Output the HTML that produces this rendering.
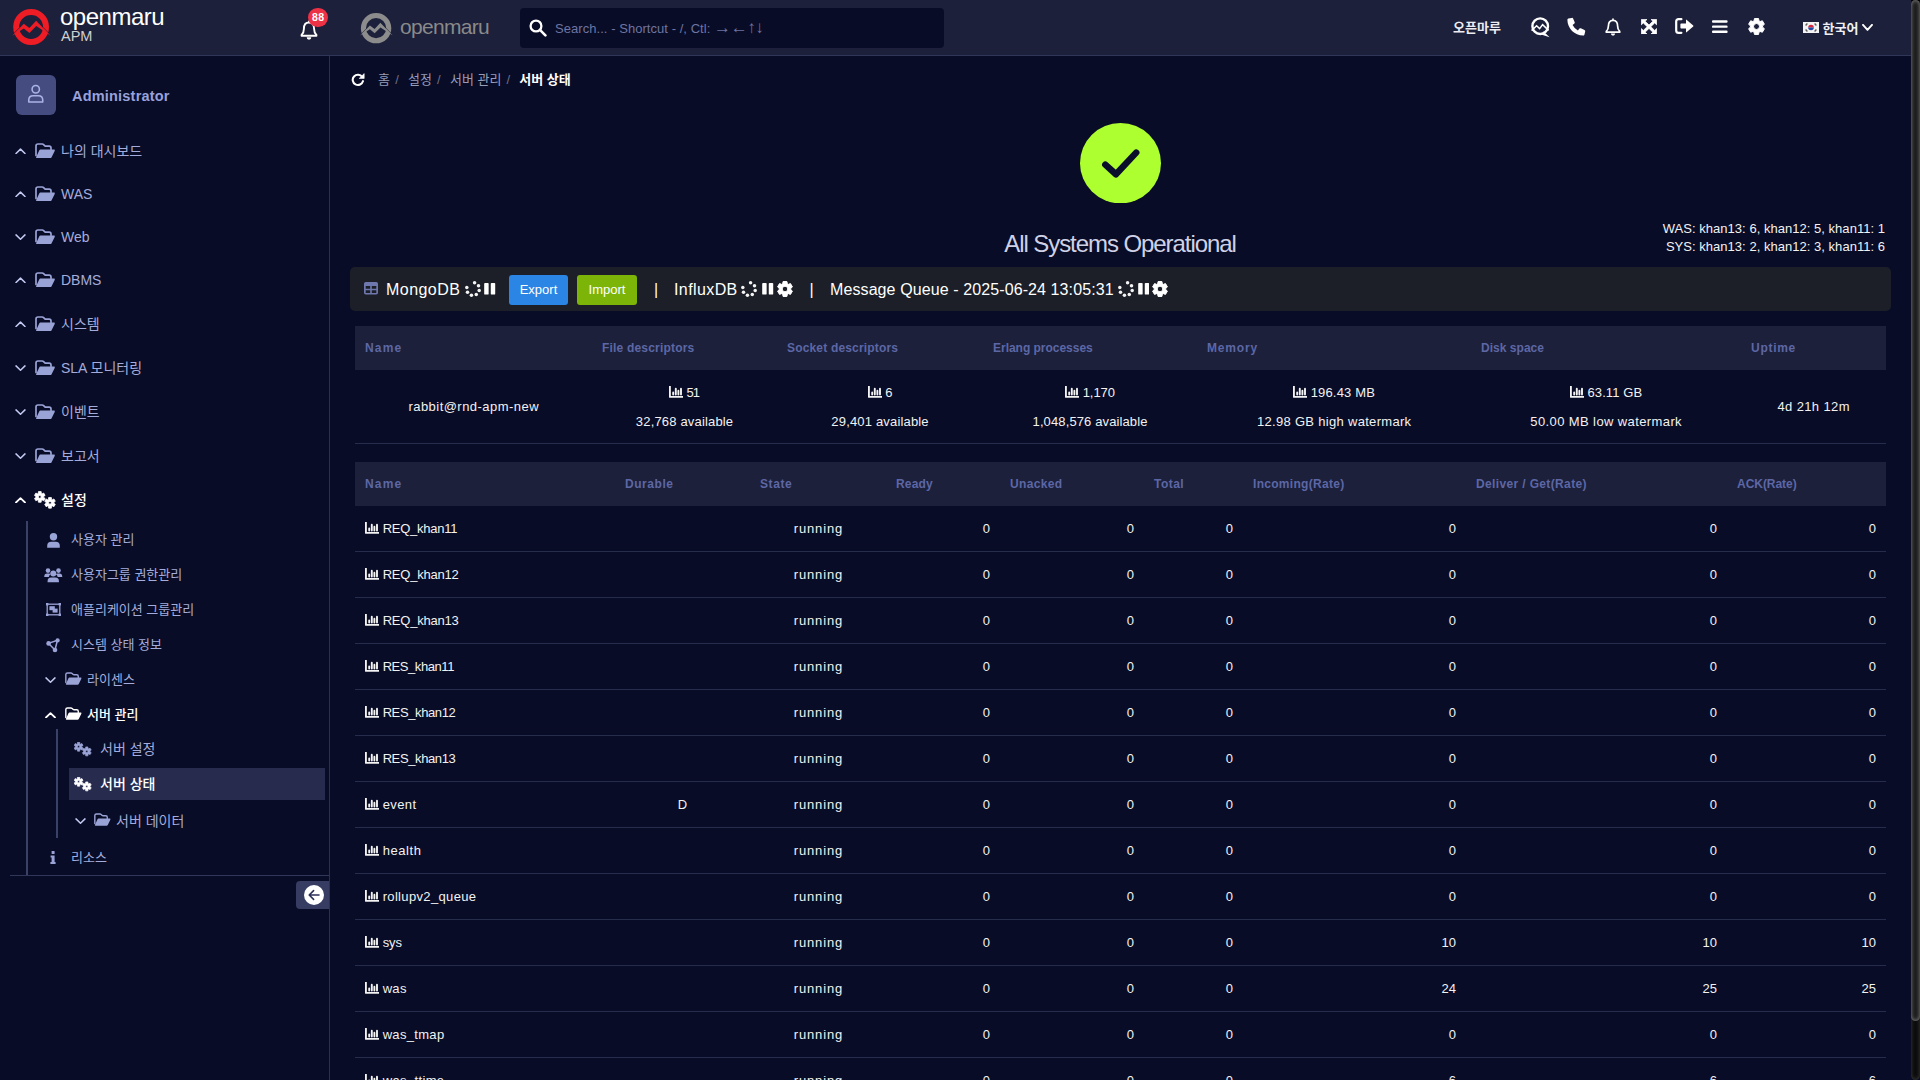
<!DOCTYPE html><html lang="ko"><head><meta charset="utf-8"><title>OPENMARU APM - 서버 상태</title><style>*{box-sizing:border-box;margin:0;padding:0}
html,body{width:1920px;height:1080px;overflow:hidden;background:#090c26;font-family:"Liberation Sans","Noto Sans CJK KR",sans-serif;color:#f2f2f2;font-size:13.5px}
svg{display:block}
#hdr{position:absolute;left:0;top:0;width:1920px;height:56px;background:#1c203a;border-bottom:1px solid #2f3657}
#hdr>div{position:absolute}
.logo1{left:11px;top:8px}
.brand1{left:60px;top:3px;font-size:24px;line-height:28px;color:#fff;letter-spacing:-0.5px;font-weight:400}
.brand2{left:61px;top:28px;font-size:14.5px;line-height:17px;color:#d0d0d0}
.bell1{left:300px;top:20px}
.badge{left:308px;top:8px;width:20px;height:19px;border-radius:10px;background:#ee3246;color:#fff;font-size:10.5px;font-weight:700;line-height:19px;text-align:center;letter-spacing:0.3px;text-indent:0.3px}
.logo2{left:359px;top:12px}
.brand3{left:400px;top:13px;font-size:21px;line-height:28px;color:#8a8a8a;letter-spacing:-0.7px;font-weight:400}
.search{left:520px;top:8px;width:424px;height:40px;background:#090c26;border-radius:4px}
.search .sicon{position:absolute;left:9px;top:11px}
.search .ph{position:absolute;left:35px;top:1px;line-height:40px;font-size:13px;color:#6d75a2;white-space:nowrap;letter-spacing:0.05px}
.search .ph .ar{position:static;font-size:17px;letter-spacing:-0.4px;line-height:20px}
.org{left:1453px;top:18.4px;font-size:13px;line-height:20px;color:#ececf2;font-weight:700;white-space:nowrap}
.hi{top:17px;width:20px;height:20px}
.flag{left:1803px;top:22px}
.lang{left:1822.5px;top:18.5px;font-size:13px;line-height:20px;color:#f0f0f4;font-weight:700;white-space:nowrap}
.langchev{left:1862px;top:24px}

#side{position:absolute;left:0;top:56px;width:330px;height:1024px;border-right:1px solid #2a3050;background:#090c26}
#side>div{position:absolute}
.avatar{left:16px;top:19px;width:40px;height:40px;border-radius:6px;background:#454d80}
.avatar svg{margin:9.2px 0 0 11.2px}
.admin{left:72px;top:30px;font-size:14.5px;font-weight:700;line-height:20px;color:#98a2dc;white-space:nowrap;letter-spacing:0.2px}
.mi,.si{left:0;width:329px;height:0}
.mi span,.si span{position:absolute;white-space:nowrap}
.mi .chev{left:15px;top:-3.4px}
.mi .fold{left:35px;top:-8px}
.mi .lbl{left:61px;top:-10px;line-height:20px;font-size:14px;color:#a4acdc}
.mi.act .lbl,.si.act .lbl{color:#fff;font-weight:500}
.mi.act .fold{left:34px;top:-9px}
.si .lbl{left:71px;top:-10px;line-height:20px;font-size:13px;color:#a4acdc}
.si .ic{left:44.2px;top:-7px;width:18px}
.si .ic svg{margin:0 auto}
.si .chev2{left:45px;top:-3px}
.si .fold2{left:65px;top:-8px}
.si .ic3{left:74px;top:-7px}
.si .chev3{left:75px;top:-3px}
.si .fold3{left:94px;top:-8px}
.si svg{transform-origin:0 0}
.fold2 svg,.fold3 svg{width:17px;height:13.5px}
.vline{width:2px;background:#3a4166}
.sel{left:69px;top:712px;width:256px;height:32px;background:#272c4f}
.hline{left:10px;top:819px;width:319px;height:1px;background:#2f3657}
.collapse{left:296px;top:825px;width:33px;height:28px;background:#373d62;border-radius:4px 0 0 4px}
.collapse svg{margin:4px 0 0 8px}

#main{position:absolute;left:330px;top:56px;width:1590px;height:1024px}
#main>div,#main>table{position:absolute}
.bc{left:0;top:0;height:48px;width:600px}
.bc span{position:absolute;top:14px;line-height:20px;font-size:13px;white-space:nowrap;margin-left:-330px}
.bc .rf{left:351.3px;top:17px}
.bc .b1{color:#979cb9}
.bc .sl{color:#6b708d}
.bc .b2{color:#fff;font-weight:700}
.okc{left:750px;top:67px}
.okt{left:490px;width:600px;top:171px;text-align:center;font-size:24px;line-height:34px;color:#cfd2e6;letter-spacing:-1.07px;font-weight:400;white-space:nowrap}
.rt{left:1000px;width:555px;text-align:right;font-size:13px;line-height:18px;color:#f2f2f2;white-space:nowrap;letter-spacing:0.03px}
.tb{left:20px;top:211px;width:1541px;height:44px;background:#1c1f28;border-radius:5px}
.tb span{position:absolute;white-space:nowrap}
.tb .tt{top:12px;line-height:22px;font-size:16px;color:#fff;letter-spacing:0.1px}
.btn{top:8px;height:30px;border-radius:3px;color:#fff;font-size:13px;line-height:30px;text-align:center}
.b-blue{background:#2b85e4}
.b-green{background:#7db408}
table{border-collapse:separate;border-spacing:0;table-layout:fixed}
.t1{left:25px;top:270px;width:1531px}
.t2{left:25px;top:406px;width:1531px}
th{height:44px;background:#1c203a;color:#5d67a6;font-size:12px;font-weight:700;text-align:left;padding:0 10px;white-space:nowrap}
td{font-size:13px;color:#f2f2f2;white-space:nowrap}
.t1 td{height:74px;text-align:center;border-bottom:1px solid #262c4c;vertical-align:middle}
.t1 .l1{line-height:20px;margin-top:1px}
.t1 .l2{line-height:20px;margin-top:9px}
.ch{display:inline-block;vertical-align:-1px;margin-right:0}
.t2 td{height:46px;border-bottom:1px solid #262c4c;padding:0 10px;vertical-align:middle}
.t2 td.c{text-align:center}
.t2 td.r{text-align:right}
#sbtrack{position:absolute;left:1911px;top:0;width:9px;height:1080px;background:#0b0b0b;border-radius:5px;box-shadow:inset 0 0 4px 0 rgba(120,120,120,.5)}
#sbtrack::before{content:"";position:absolute;left:0;top:0;width:9px;height:6px;background:#000}
#sbthumb{position:absolute;left:1911px;top:0;width:9px;height:1021px;border-radius:4.5px;background:#1b1b1b;box-shadow:inset 0 0 4px 0px rgba(220,220,220,.6)}
</style></head><body>

<div id="hdr">
  <div class="logo1"><svg width="40" height="38" viewBox="0 0 40 38" ><circle cx="20.1" cy="19" r="14.9" fill="none" stroke="#ee1c25" stroke-width="6"/><path d="M1.25 27.3 L12.8 15.5 L18.4 19.6 L25.1 12.45 L39.7 27.3" fill="none" stroke="#1c203a" stroke-width="0.9"/><path d="M1.25 27.7 L12.8 15.8 L18.4 19.9 L25.1 12.75 L39.7 27.7 L25.3 18.1 L18.4 25 L12.8 20.4 Z" fill="#ee1c25"/></svg></div>
  <div class="brand1">openmaru</div>
  <div class="brand2">APM</div>
  <div class="bell1"><svg width="18" height="20" viewBox="0 0 16 18" ><path d="M8 1.2 V2.4 M8 2.3 C4.6 2.3 3.4 5 3.4 8 C3.4 11 2.6 12.2 1.3 13.4 V14.2 H14.7 V13.4 C13.4 12.2 12.6 11 12.6 8 C12.6 5 11.4 2.3 8 2.3Z" fill="none" stroke="#ffffff" stroke-width="1.7" stroke-linejoin="round" stroke-linecap="round"/><path d="M5.9 15.6 A2.1 2.1 0 0 0 10.1 15.6Z" fill="#ffffff"/></svg></div>
  <div class="badge">88</div>
  <div class="logo2"><svg width="34" height="32.3" viewBox="0 0 40 38" ><circle cx="20.1" cy="19" r="14.9" fill="none" stroke="#8c8c8c" stroke-width="6"/><path d="M1.25 27.3 L12.8 15.5 L18.4 19.6 L25.1 12.45 L39.7 27.3" fill="none" stroke="#1c203a" stroke-width="0.9"/><path d="M1.25 27.7 L12.8 15.8 L18.4 19.9 L25.1 12.75 L39.7 27.7 L25.3 18.1 L18.4 25 L12.8 20.4 Z" fill="#8c8c8c"/></svg></div>
  <div class="brand3">openmaru</div>
  <div class="search"><span class="sicon"><svg width="18" height="18" viewBox="0 0 18 18" ><circle cx="7" cy="7" r="5.4" fill="none" stroke="#fff" stroke-width="2.3"/><path d="M11.2 11.2 L16.4 16.4" stroke="#fff" stroke-width="2.6" stroke-linecap="round"/></svg></span><span class="ph">Search... - Shortcut - /, Ctl: <span class="ar">→←↑↓</span></span></div>
  <div class="org">오픈마루</div>
  <div class="hi" style="left:1531px;top:17px"><svg width="19" height="21" viewBox="0 0 19 21" ><circle cx="9.2" cy="9.2" r="7.8" fill="none" stroke="#fff" stroke-width="2.4"/><path d="M12.6 14.6 L18.6 20.2 L10.2 17.4 Z" fill="#fff"/><path d="M0.6 13.6 L5.6 8.8 L8.6 11.6 L11.6 7.6 L17.6 13.4" fill="none" stroke="#fff" stroke-width="1.5" stroke-linejoin="miter"/></svg></div>
  <div class="hi" style="left:1567px;top:17px"><svg width="19" height="19" viewBox="0 0 19 19" ><path d="M4.6 0.9 Q5.6 0.5 6.1 1.5 L7.7 5.2 Q8 6 7.4 6.6 L5.6 8.1 Q7.4 11.8 10.9 13.4 L12.4 11.6 Q13 11 13.8 11.3 L17.5 12.9 Q18.5 13.4 18.2 14.4 L17.4 17.7 Q17.1 18.6 16.2 18.6 C7.6 18.6 0.4 11.4 0.4 2.8 Q0.4 1.9 1.3 1.6 Z" fill="#fff"/></svg></div>
  <div class="hi" style="left:1604.5px;top:17.5px"><svg width="16" height="18" viewBox="0 0 16 18" ><path d="M8 1.2 V2.4 M8 2.3 C4.6 2.3 3.4 5 3.4 8 C3.4 11 2.6 12.2 1.3 13.4 V14.2 H14.7 V13.4 C13.4 12.2 12.6 11 12.6 8 C12.6 5 11.4 2.3 8 2.3Z" fill="none" stroke="#ffffff" stroke-width="1.7" stroke-linejoin="round" stroke-linecap="round"/><path d="M5.9 15.6 A2.1 2.1 0 0 0 10.1 15.6Z" fill="#ffffff"/></svg></div>
  <div class="hi" style="left:1640.5px;top:18.7px"><svg width="16" height="15.4" viewBox="0 0 16 16" preserveAspectRatio="none"><path d="M0.4 0.4 H6 L4.1 2.3 L8 6.2 L11.9 2.3 L10 0.4 H15.6 V6 L13.7 4.1 L9.8 8 L13.7 11.9 L15.6 10 V15.6 H10 L11.9 13.7 L8 9.8 L4.1 13.7 L6 15.6 H0.4 V10 L2.3 11.9 L6.2 8 L2.3 4.1 L0.4 6 Z" fill="#fff" stroke="#fff" stroke-width="0.8" stroke-linejoin="round"/></svg></div>
  <div class="hi" style="left:1675px;top:18.4px"><svg width="19" height="16" viewBox="0 0 19 16" ><path d="M6.4 1.2 H3.6 Q1.2 1.2 1.2 3.6 V12.4 Q1.2 14.8 3.6 14.8 H6.4" fill="none" stroke="#fff" stroke-width="2.2" stroke-linecap="round"/><path d="M6.2 5.4 H11 V2.2 Q11 1.2 11.8 1.9 L18.2 7.4 Q18.8 8 18.2 8.6 L11.8 14.1 Q11 14.8 11 13.8 V10.6 H6.2 Q5.4 10.6 5.4 9.8 V6.2 Q5.4 5.4 6.2 5.4Z" fill="#fff"/></svg></div>
  <div class="hi" style="left:1712.4px;top:19.5px"><svg width="15.6" height="13.4" viewBox="0 0 16 14" preserveAspectRatio="none"><rect x="0" y="0.3" width="16" height="2.5" rx="1" fill="#fff"/><rect x="0" y="5.7" width="16" height="2.5" rx="1" fill="#fff"/><rect x="0" y="11.1" width="16" height="2.5" rx="1" fill="#fff"/></svg></div>
  <div class="hi" style="left:1748px;top:18px"><svg width="17" height="17" viewBox="0 0 17 17" ><path d="M11.00 14.09 L10.53 16.45 L6.47 16.45 L6.00 14.09 L4.91 13.46 L2.63 14.23 L0.61 10.72 L2.41 9.13 L2.41 7.87 L0.61 6.28 L2.63 2.77 L4.91 3.54 L6.00 2.91 L6.47 0.55 L10.53 0.55 L11.00 2.91 L12.09 3.54 L14.37 2.77 L16.39 6.28 L14.59 7.87 L14.59 9.13 L16.39 10.72 L14.37 14.23 L12.09 13.46Z M5.53 8.50 a2.9749999999999996 2.9749999999999996 0 1 0 5.95 0 a2.9749999999999996 2.9749999999999996 0 1 0 -5.95 0Z" fill="#ffffff" fill-rule="evenodd" stroke="#ffffff" stroke-width="1" stroke-linejoin="round"/></svg></div>
  <div class="flag"><svg width="16" height="11" viewBox="0 0 16 11" ><rect width="16" height="11" fill="#f4f4f4"/><path d="M5.2 5.5 A2.8 2.8 0 0 1 10.8 5.5 Z" fill="#d8283c"/><path d="M5.2 5.5 A2.8 2.8 0 0 0 10.8 5.5 Z" fill="#1f4aa8"/><path d="M2.6 3.4 L4.4 1.6 M2.6 7.6 L4.4 9.4 M13.4 3.4 L11.6 1.6 M13.4 7.6 L11.6 9.4" stroke="#5a5a5a" stroke-width="1.4"/><path d="M6.4 5.5 A1.4 1.4 0 0 1 8 5.5 A1.4 1.4 0 0 0 9.6 5.5" fill="none" stroke="#d8283c" stroke-width="0.1"/></svg></div>
  <div class="lang">한국어</div>
  <div class="langchev"><svg width="11" height="7" viewBox="0 0 11 7" ><path d="M1 0.9 L5.5 5.9 L10 0.9" fill="none" stroke="#ffffff" stroke-width="1.9" stroke-linecap="round" stroke-linejoin="round"/></svg></div>
</div>

<div id="side">
<div class="avatar"><svg width="17.5" height="19.25" viewBox="0 0 20 22" ><circle cx="10" cy="6" r="4.2" fill="none" stroke="#aab3e6" stroke-width="1.8"/><path d="M2 20.6 V18.6 Q2 13.4 7 13.4 H13 Q18 13.4 18 18.6 V20.6 Z" fill="none" stroke="#aab3e6" stroke-width="1.8" stroke-linejoin="round"/></svg></div><div class="admin">Administrator</div>
<div class="mi" style="top:95px"><span class="chev"><svg width="11" height="6.4" viewBox="0 0 11 6.4" ><path d="M1 5.5 L5.5 1.1 L10 5.5" fill="none" stroke="#c3caf2" stroke-width="1.5" stroke-linecap="round" stroke-linejoin="round"/></svg></span><span class="fold"><svg width="20.5" height="16" viewBox="0 0 20.5 16" ><path d="M1 12.5 V3 Q1 1 3 1 H7.2 Q8 1 8.6 1.6 L9.6 2.6 Q10.2 3.2 11 3.2 H14.2 Q16 3.2 16 5 V6.4" fill="none" stroke="#9aa3d6" stroke-width="1.7" stroke-linejoin="round" stroke-linecap="round"/><path d="M5.4 6.6 H19 Q20.3 6.6 19.7 7.9 L16.6 14.2 Q16.2 15.1 15.2 15.1 H2 Q0.6 15.1 1.2 13.9 L4.2 7.5 Q4.6 6.6 5.4 6.6Z" fill="#9aa3d6"/></svg></span><span class="lbl">나의 대시보드</span></div>
<div class="mi" style="top:138px"><span class="chev"><svg width="11" height="6.4" viewBox="0 0 11 6.4" ><path d="M1 5.5 L5.5 1.1 L10 5.5" fill="none" stroke="#c3caf2" stroke-width="1.5" stroke-linecap="round" stroke-linejoin="round"/></svg></span><span class="fold"><svg width="20.5" height="16" viewBox="0 0 20.5 16" ><path d="M1 12.5 V3 Q1 1 3 1 H7.2 Q8 1 8.6 1.6 L9.6 2.6 Q10.2 3.2 11 3.2 H14.2 Q16 3.2 16 5 V6.4" fill="none" stroke="#9aa3d6" stroke-width="1.7" stroke-linejoin="round" stroke-linecap="round"/><path d="M5.4 6.6 H19 Q20.3 6.6 19.7 7.9 L16.6 14.2 Q16.2 15.1 15.2 15.1 H2 Q0.6 15.1 1.2 13.9 L4.2 7.5 Q4.6 6.6 5.4 6.6Z" fill="#9aa3d6"/></svg></span><span class="lbl">WAS</span></div>
<div class="mi" style="top:181px"><span class="chev"><svg width="11" height="6.4" viewBox="0 0 11 6.4" ><path d="M1 0.9 L5.5 5.300000000000001 L10 0.9" fill="none" stroke="#c3caf2" stroke-width="1.5" stroke-linecap="round" stroke-linejoin="round"/></svg></span><span class="fold"><svg width="20.5" height="16" viewBox="0 0 20.5 16" ><path d="M1 12.5 V3 Q1 1 3 1 H7.2 Q8 1 8.6 1.6 L9.6 2.6 Q10.2 3.2 11 3.2 H14.2 Q16 3.2 16 5 V6.4" fill="none" stroke="#9aa3d6" stroke-width="1.7" stroke-linejoin="round" stroke-linecap="round"/><path d="M5.4 6.6 H19 Q20.3 6.6 19.7 7.9 L16.6 14.2 Q16.2 15.1 15.2 15.1 H2 Q0.6 15.1 1.2 13.9 L4.2 7.5 Q4.6 6.6 5.4 6.6Z" fill="#9aa3d6"/></svg></span><span class="lbl">Web</span></div>
<div class="mi" style="top:224px"><span class="chev"><svg width="11" height="6.4" viewBox="0 0 11 6.4" ><path d="M1 5.5 L5.5 1.1 L10 5.5" fill="none" stroke="#c3caf2" stroke-width="1.5" stroke-linecap="round" stroke-linejoin="round"/></svg></span><span class="fold"><svg width="20.5" height="16" viewBox="0 0 20.5 16" ><path d="M1 12.5 V3 Q1 1 3 1 H7.2 Q8 1 8.6 1.6 L9.6 2.6 Q10.2 3.2 11 3.2 H14.2 Q16 3.2 16 5 V6.4" fill="none" stroke="#9aa3d6" stroke-width="1.7" stroke-linejoin="round" stroke-linecap="round"/><path d="M5.4 6.6 H19 Q20.3 6.6 19.7 7.9 L16.6 14.2 Q16.2 15.1 15.2 15.1 H2 Q0.6 15.1 1.2 13.9 L4.2 7.5 Q4.6 6.6 5.4 6.6Z" fill="#9aa3d6"/></svg></span><span class="lbl">DBMS</span></div>
<div class="mi" style="top:268px"><span class="chev"><svg width="11" height="6.4" viewBox="0 0 11 6.4" ><path d="M1 5.5 L5.5 1.1 L10 5.5" fill="none" stroke="#c3caf2" stroke-width="1.5" stroke-linecap="round" stroke-linejoin="round"/></svg></span><span class="fold"><svg width="20.5" height="16" viewBox="0 0 20.5 16" ><path d="M1 12.5 V3 Q1 1 3 1 H7.2 Q8 1 8.6 1.6 L9.6 2.6 Q10.2 3.2 11 3.2 H14.2 Q16 3.2 16 5 V6.4" fill="none" stroke="#9aa3d6" stroke-width="1.7" stroke-linejoin="round" stroke-linecap="round"/><path d="M5.4 6.6 H19 Q20.3 6.6 19.7 7.9 L16.6 14.2 Q16.2 15.1 15.2 15.1 H2 Q0.6 15.1 1.2 13.9 L4.2 7.5 Q4.6 6.6 5.4 6.6Z" fill="#9aa3d6"/></svg></span><span class="lbl">시스템</span></div>
<div class="mi" style="top:312px"><span class="chev"><svg width="11" height="6.4" viewBox="0 0 11 6.4" ><path d="M1 0.9 L5.5 5.300000000000001 L10 0.9" fill="none" stroke="#c3caf2" stroke-width="1.5" stroke-linecap="round" stroke-linejoin="round"/></svg></span><span class="fold"><svg width="20.5" height="16" viewBox="0 0 20.5 16" ><path d="M1 12.5 V3 Q1 1 3 1 H7.2 Q8 1 8.6 1.6 L9.6 2.6 Q10.2 3.2 11 3.2 H14.2 Q16 3.2 16 5 V6.4" fill="none" stroke="#9aa3d6" stroke-width="1.7" stroke-linejoin="round" stroke-linecap="round"/><path d="M5.4 6.6 H19 Q20.3 6.6 19.7 7.9 L16.6 14.2 Q16.2 15.1 15.2 15.1 H2 Q0.6 15.1 1.2 13.9 L4.2 7.5 Q4.6 6.6 5.4 6.6Z" fill="#9aa3d6"/></svg></span><span class="lbl">SLA 모니터링</span></div>
<div class="mi" style="top:356px"><span class="chev"><svg width="11" height="6.4" viewBox="0 0 11 6.4" ><path d="M1 0.9 L5.5 5.300000000000001 L10 0.9" fill="none" stroke="#c3caf2" stroke-width="1.5" stroke-linecap="round" stroke-linejoin="round"/></svg></span><span class="fold"><svg width="20.5" height="16" viewBox="0 0 20.5 16" ><path d="M1 12.5 V3 Q1 1 3 1 H7.2 Q8 1 8.6 1.6 L9.6 2.6 Q10.2 3.2 11 3.2 H14.2 Q16 3.2 16 5 V6.4" fill="none" stroke="#9aa3d6" stroke-width="1.7" stroke-linejoin="round" stroke-linecap="round"/><path d="M5.4 6.6 H19 Q20.3 6.6 19.7 7.9 L16.6 14.2 Q16.2 15.1 15.2 15.1 H2 Q0.6 15.1 1.2 13.9 L4.2 7.5 Q4.6 6.6 5.4 6.6Z" fill="#9aa3d6"/></svg></span><span class="lbl">이벤트</span></div>
<div class="mi" style="top:400px"><span class="chev"><svg width="11" height="6.4" viewBox="0 0 11 6.4" ><path d="M1 0.9 L5.5 5.300000000000001 L10 0.9" fill="none" stroke="#c3caf2" stroke-width="1.5" stroke-linecap="round" stroke-linejoin="round"/></svg></span><span class="fold"><svg width="20.5" height="16" viewBox="0 0 20.5 16" ><path d="M1 12.5 V3 Q1 1 3 1 H7.2 Q8 1 8.6 1.6 L9.6 2.6 Q10.2 3.2 11 3.2 H14.2 Q16 3.2 16 5 V6.4" fill="none" stroke="#9aa3d6" stroke-width="1.7" stroke-linejoin="round" stroke-linecap="round"/><path d="M5.4 6.6 H19 Q20.3 6.6 19.7 7.9 L16.6 14.2 Q16.2 15.1 15.2 15.1 H2 Q0.6 15.1 1.2 13.9 L4.2 7.5 Q4.6 6.6 5.4 6.6Z" fill="#9aa3d6"/></svg></span><span class="lbl">보고서</span></div>
<div class="mi act" style="top:444px"><span class="chev"><svg width="11" height="6.4" viewBox="0 0 11 6.4" ><path d="M1 5.5 L5.5 1.1 L10 5.5" fill="none" stroke="#ffffff" stroke-width="1.8" stroke-linecap="round" stroke-linejoin="round"/></svg></span><span class="fold"><svg width="22" height="18" viewBox="0 0 22 18" ><path d="M7.32 9.49 L7.16 11.23 L4.44 11.23 L4.28 9.49 L3.45 9.01 L1.87 9.74 L0.50 7.39 L1.93 6.38 L1.93 5.42 L0.50 4.41 L1.87 2.06 L3.45 2.79 L4.28 2.31 L4.44 0.57 L7.16 0.57 L7.32 2.31 L8.15 2.79 L9.73 2.06 L11.10 4.41 L9.67 5.42 L9.67 6.38 L11.10 7.39 L9.73 9.74 L8.15 9.01Z M4.40 5.90 a1.4 1.4 0 1 0 2.80 0 a1.4 1.4 0 1 0 -2.80 0Z" fill="#ffffff" fill-rule="evenodd" stroke="#ffffff" stroke-width="0.8" stroke-linejoin="round"/><path d="M17.52 15.39 L17.36 17.13 L14.64 17.13 L14.48 15.39 L13.65 14.91 L12.07 15.64 L10.70 13.29 L12.13 12.28 L12.13 11.32 L10.70 10.31 L12.07 7.96 L13.65 8.69 L14.48 8.21 L14.64 6.47 L17.36 6.47 L17.52 8.21 L18.35 8.69 L19.93 7.96 L21.30 10.31 L19.87 11.32 L19.87 12.28 L21.30 13.29 L19.93 15.64 L18.35 14.91Z M14.60 11.80 a1.4 1.4 0 1 0 2.80 0 a1.4 1.4 0 1 0 -2.80 0Z" fill="#ffffff" fill-rule="evenodd" stroke="#ffffff" stroke-width="0.8" stroke-linejoin="round"/></svg></span><span class="lbl" style="left:61px">설정</span></div>
<div class="vline" style="left:26px;top:465px;height:354px"></div>
<div class="si" style="top:484px"><span class="ic"><svg width="13" height="15" viewBox="0 0 13 15" ><circle cx="6.5" cy="3.8" r="3.7" fill="#9aa3d6"/><path d="M0.2 14.8 V13 Q0.2 8.8 4.4 8.8 H8.6 Q12.8 8.8 12.8 13 V14.8Z" fill="#9aa3d6"/></svg></span><span class="lbl">사용자 관리</span></div>
<div class="si" style="top:519px"><span class="ic"><svg width="18.5" height="14.5" viewBox="0 0 18.5 14.5" ><circle cx="4" cy="2.6" r="2.3" fill="#9aa3d6"/><circle cx="14.5" cy="2.6" r="2.3" fill="#9aa3d6"/><path d="M0.2 9 Q0.2 5.6 3.2 5.6 H5 Q6 5.6 6.6 6.2 Q5 7.4 4.8 9Z" fill="#9aa3d6"/><path d="M18.3 9 Q18.3 5.6 15.3 5.6 H13.5 Q12.5 5.6 11.9 6.2 Q13.5 7.4 13.7 9Z" fill="#9aa3d6"/><circle cx="9.25" cy="5.6" r="3" fill="#9aa3d6"/><path d="M3.6 14.3 V13.2 Q3.6 9.5 7 9.5 H11.5 Q14.9 9.5 14.9 13.2 V14.3Z" fill="#9aa3d6"/></svg></span><span class="lbl">사용자그룹 권한관리</span></div>
<div class="si" style="top:554px"><span class="ic"><svg width="15" height="13" viewBox="0 0 15 13" ><rect x="1.2" y="1.2" width="12.6" height="10.6" fill="none" stroke="#9aa3d6" stroke-width="1.3"/><rect x="0" y="0" width="2.4" height="2.4" fill="#9aa3d6"/><rect x="12.6" y="0" width="2.4" height="2.4" fill="#9aa3d6"/><rect x="0" y="10.6" width="2.4" height="2.4" fill="#9aa3d6"/><rect x="12.6" y="10.6" width="2.4" height="2.4" fill="#9aa3d6"/><rect x="3.4" y="3.2" width="5.4" height="4" fill="#9aa3d6"/><rect x="6.6" y="5.6" width="5" height="4" fill="#9aa3d6"/></svg></span><span class="lbl">애플리케이션 그룹관리</span></div>
<div class="si" style="top:589px"><span class="ic"><svg width="14.5" height="14.5" viewBox="0 0 14.5 14.5" ><path d="M2.6 5.4 L11.4 2.2 L9 12 Z" fill="none" stroke="#9aa3d6" stroke-width="1.5" stroke-linejoin="round"/><circle cx="2.6" cy="5.4" r="2.3" fill="#9aa3d6"/><circle cx="11.6" cy="2.4" r="2.1" fill="#9aa3d6"/><circle cx="9" cy="12" r="2.3" fill="#9aa3d6"/></svg></span><span class="lbl">시스템 상태 정보</span></div>
<div class="si" style="top:624px"><span class="chev2"><svg width="11" height="6.4" viewBox="0 0 11 6.4" ><path d="M1 0.9 L5.5 5.300000000000001 L10 0.9" fill="none" stroke="#c3caf2" stroke-width="1.5" stroke-linecap="round" stroke-linejoin="round"/></svg></span><span class="fold2"><svg width="20.5" height="16" viewBox="0 0 20.5 16" ><path d="M1 12.5 V3 Q1 1 3 1 H7.2 Q8 1 8.6 1.6 L9.6 2.6 Q10.2 3.2 11 3.2 H14.2 Q16 3.2 16 5 V6.4" fill="none" stroke="#9aa3d6" stroke-width="1.7" stroke-linejoin="round" stroke-linecap="round"/><path d="M5.4 6.6 H19 Q20.3 6.6 19.7 7.9 L16.6 14.2 Q16.2 15.1 15.2 15.1 H2 Q0.6 15.1 1.2 13.9 L4.2 7.5 Q4.6 6.6 5.4 6.6Z" fill="#9aa3d6"/></svg></span><span class="lbl" style="left:87px">라이센스</span></div>
<div class="si act" style="top:659px"><span class="chev2"><svg width="11" height="6.4" viewBox="0 0 11 6.4" ><path d="M1 5.5 L5.5 1.1 L10 5.5" fill="none" stroke="#ffffff" stroke-width="1.8" stroke-linecap="round" stroke-linejoin="round"/></svg></span><span class="fold2"><svg width="20.5" height="16" viewBox="0 0 20.5 16" ><path d="M1 12.5 V3 Q1 1 3 1 H7.2 Q8 1 8.6 1.6 L9.6 2.6 Q10.2 3.2 11 3.2 H14.2 Q16 3.2 16 5 V6.4" fill="none" stroke="#ffffff" stroke-width="1.7" stroke-linejoin="round" stroke-linecap="round"/><path d="M5.4 6.6 H19 Q20.3 6.6 19.7 7.9 L16.6 14.2 Q16.2 15.1 15.2 15.1 H2 Q0.6 15.1 1.2 13.9 L4.2 7.5 Q4.6 6.6 5.4 6.6Z" fill="#ffffff"/></svg></span><span class="lbl" style="left:87px">서버 관리</span></div>
<div class="vline" style="left:56px;top:673px;height:109px"></div>
<div class="si" style="top:693px"><span class="ic3"><svg width="18" height="14.5" viewBox="0 0 18 14.5" ><path d="M5.85 7.65 L5.69 9.17 L3.51 9.17 L3.35 7.65 L2.67 7.25 L1.28 7.88 L0.18 5.99 L1.42 5.09 L1.42 4.31 L0.18 3.41 L1.28 1.52 L2.67 2.15 L3.35 1.75 L3.51 0.23 L5.69 0.23 L5.85 1.75 L6.53 2.15 L7.92 1.52 L9.02 3.41 L7.78 4.31 L7.78 5.09 L9.02 5.99 L7.92 7.88 L6.53 7.25Z M3.50 4.70 a1.1 1.1 0 1 0 2.20 0 a1.1 1.1 0 1 0 -2.20 0Z" fill="#9aa3d6" fill-rule="evenodd" stroke="#9aa3d6" stroke-width="0.7" stroke-linejoin="round"/><path d="M14.05 12.35 L13.89 13.87 L11.71 13.87 L11.55 12.35 L10.87 11.95 L9.48 12.58 L8.38 10.69 L9.62 9.79 L9.62 9.01 L8.38 8.11 L9.48 6.22 L10.87 6.85 L11.55 6.45 L11.71 4.93 L13.89 4.93 L14.05 6.45 L14.73 6.85 L16.12 6.22 L17.22 8.11 L15.98 9.01 L15.98 9.79 L17.22 10.69 L16.12 12.58 L14.73 11.95Z M11.70 9.40 a1.1 1.1 0 1 0 2.20 0 a1.1 1.1 0 1 0 -2.20 0Z" fill="#9aa3d6" fill-rule="evenodd" stroke="#9aa3d6" stroke-width="0.7" stroke-linejoin="round"/></svg></span><span class="lbl" style="left:100px;font-size:14px">서버 설정</span></div>
<div class="sel"></div>
<div class="si act" style="top:728px"><span class="ic3"><svg width="18" height="14.5" viewBox="0 0 18 14.5" ><path d="M5.85 7.65 L5.69 9.17 L3.51 9.17 L3.35 7.65 L2.67 7.25 L1.28 7.88 L0.18 5.99 L1.42 5.09 L1.42 4.31 L0.18 3.41 L1.28 1.52 L2.67 2.15 L3.35 1.75 L3.51 0.23 L5.69 0.23 L5.85 1.75 L6.53 2.15 L7.92 1.52 L9.02 3.41 L7.78 4.31 L7.78 5.09 L9.02 5.99 L7.92 7.88 L6.53 7.25Z M3.50 4.70 a1.1 1.1 0 1 0 2.20 0 a1.1 1.1 0 1 0 -2.20 0Z" fill="#ffffff" fill-rule="evenodd" stroke="#ffffff" stroke-width="0.7" stroke-linejoin="round"/><path d="M14.05 12.35 L13.89 13.87 L11.71 13.87 L11.55 12.35 L10.87 11.95 L9.48 12.58 L8.38 10.69 L9.62 9.79 L9.62 9.01 L8.38 8.11 L9.48 6.22 L10.87 6.85 L11.55 6.45 L11.71 4.93 L13.89 4.93 L14.05 6.45 L14.73 6.85 L16.12 6.22 L17.22 8.11 L15.98 9.01 L15.98 9.79 L17.22 10.69 L16.12 12.58 L14.73 11.95Z M11.70 9.40 a1.1 1.1 0 1 0 2.20 0 a1.1 1.1 0 1 0 -2.20 0Z" fill="#ffffff" fill-rule="evenodd" stroke="#ffffff" stroke-width="0.7" stroke-linejoin="round"/></svg></span><span class="lbl" style="left:100px;font-size:14px">서버 상태</span></div>
<div class="si" style="top:765px"><span class="chev3"><svg width="11" height="6.4" viewBox="0 0 11 6.4" ><path d="M1 0.9 L5.5 5.300000000000001 L10 0.9" fill="none" stroke="#c3caf2" stroke-width="1.5" stroke-linecap="round" stroke-linejoin="round"/></svg></span><span class="fold3"><svg width="20.5" height="16" viewBox="0 0 20.5 16" ><path d="M1 12.5 V3 Q1 1 3 1 H7.2 Q8 1 8.6 1.6 L9.6 2.6 Q10.2 3.2 11 3.2 H14.2 Q16 3.2 16 5 V6.4" fill="none" stroke="#9aa3d6" stroke-width="1.7" stroke-linejoin="round" stroke-linecap="round"/><path d="M5.4 6.6 H19 Q20.3 6.6 19.7 7.9 L16.6 14.2 Q16.2 15.1 15.2 15.1 H2 Q0.6 15.1 1.2 13.9 L4.2 7.5 Q4.6 6.6 5.4 6.6Z" fill="#9aa3d6"/></svg></span><span class="lbl" style="left:116px;font-size:14px">서버 데이터</span></div>
<div class="si" style="top:802px"><span class="ic"><svg width="6" height="13" viewBox="0 0 6 13" ><rect x="1.6" y="0" width="3" height="3" rx="0.6" fill="#9aa3d6"/><path d="M0.6 4.6 H4.6 V11 H5.6 V13 H0.4 V11 H1.6 V6.6 H0.6Z" fill="#9aa3d6"/></svg></span><span class="lbl">리소스</span></div>
<div class="hline"></div>
<div class="collapse"><svg width="20" height="20" viewBox="0 0 20 20" ><circle cx="10" cy="10" r="10" fill="#fff"/><path d="M15 10 H5.6 M9.6 5.6 L5.2 10 L9.6 14.4" fill="none" stroke="#2b3158" stroke-width="1.6" stroke-linecap="round" stroke-linejoin="round"/></svg></div>
</div>
<div id="main">
<div class="bc"><span class="rf"><svg width="13.6" height="13.2" viewBox="0 0 14 14" preserveAspectRatio="none"><path d="M11.6 4.2 A5.4 5.4 0 1 0 12.4 8.6" fill="none" stroke="#fff" stroke-width="2.1" stroke-linecap="round"/><path d="M13.6 0.6 V5.8 H8.4 Z" fill="#fff" stroke="#fff" stroke-width="0.6" stroke-linejoin="round"/></svg></span><span class="b1" style="left:378px">홈</span><span class="sl" style="left:395.3px">/</span><span class="b1" style="left:408px">설정</span><span class="sl" style="left:437px">/</span><span class="b1" style="left:450px">서버 관리</span><span class="sl" style="left:506.5px">/</span><span class="b2" style="left:519.3px">서버 상태</span></div>
<div class="okc"><svg width="81" height="80.4" viewBox="0 0 80 80" preserveAspectRatio="none"><circle cx="40" cy="40" r="40" fill="#adff2f"/><path d="M25 41.5 L35.5 51 L55.5 29.5" fill="none" stroke="#0a0e2a" stroke-width="6.4" stroke-linecap="round" stroke-linejoin="round"/></svg></div>
<div class="okt">All Systems Operational</div>
<div class="rt" style="top:164px">WAS: khan13: 6, khan12: 5, khan11: 1</div>
<div class="rt" style="top:182px">SYS: khan13: 2, khan12: 3, khan11: 6</div>
<div class="tb">
<span class="ti" style="left:13.7px;top:15.3px"><svg width="14" height="12.5" viewBox="0 0 14 12.5" ><path d="M1.8 0 H12.2 Q14 0 14 1.8 V10.7 Q14 12.5 12.2 12.5 H1.8 Q0 12.5 0 10.7 V1.8 Q0 0 1.8 0Z M1.7 4 V6.7 H6.2 V4Z M7.8 4 V6.7 H12.3 V4Z M1.7 8.2 V10.9 H6.2 V8.2Z M7.8 8.2 V10.9 H12.3 V8.2Z" fill="#6f78ae" fill-rule="evenodd"/></svg></span>
<span class="tt" style="left:36px;letter-spacing:0.45px">MongoDB</span>
<span class="ti" style="left:114.7px;top:13.6px"><svg width="16" height="16" viewBox="0 0 16 16" ><circle cx="14.20" cy="9.58" r="1.75" fill="#f4f4f4"/><circle cx="11.27" cy="13.50" r="1.75" fill="#f4f4f4"/><circle cx="6.42" cy="14.20" r="1.75" fill="#f4f4f4"/><circle cx="2.50" cy="11.27" r="1.75" fill="#f4f4f4"/><circle cx="1.80" cy="6.42" r="1.75" fill="#f4f4f4"/><circle cx="9.58" cy="1.80" r="1.75" fill="#f4f4f4"/><circle cx="13.50" cy="4.73" r="1.75" fill="#f4f4f4"/></svg></span>
<span class="ti" style="left:134px;top:16px"><svg width="11.6" height="11.6" viewBox="0 0 12 12" ><rect x="0.2" y="0" width="4.6" height="12" rx="0.9" fill="#fff"/><rect x="7" y="0" width="4.6" height="12" rx="0.9" fill="#fff"/></svg></span>
<span class="btn b-blue" style="left:159px;width:59px">Export</span>
<span class="btn b-green" style="left:227px;width:60px">Import</span>
<span class="tt" style="left:304px">|</span>
<span class="tt" style="left:324px;letter-spacing:0.4px">InfluxDB</span>
<span class="ti" style="left:391px;top:14px"><svg width="16" height="16" viewBox="0 0 16 16" ><circle cx="14.20" cy="9.58" r="1.75" fill="#f4f4f4"/><circle cx="11.27" cy="13.50" r="1.75" fill="#f4f4f4"/><circle cx="6.42" cy="14.20" r="1.75" fill="#f4f4f4"/><circle cx="2.50" cy="11.27" r="1.75" fill="#f4f4f4"/><circle cx="1.80" cy="6.42" r="1.75" fill="#f4f4f4"/><circle cx="9.58" cy="1.80" r="1.75" fill="#f4f4f4"/><circle cx="13.50" cy="4.73" r="1.75" fill="#f4f4f4"/></svg></span>
<span class="ti" style="left:412px;top:16px"><svg width="11.6" height="11.6" viewBox="0 0 12 12" ><rect x="0.2" y="0" width="4.6" height="12" rx="0.9" fill="#fff"/><rect x="7" y="0" width="4.6" height="12" rx="0.9" fill="#fff"/></svg></span>
<span class="ti" style="left:426.5px;top:14px"><svg width="16" height="16" viewBox="0 0 16 16" ><path d="M10.35 13.26 L9.91 15.46 L6.09 15.46 L5.65 13.26 L4.62 12.66 L2.49 13.38 L0.59 10.08 L2.27 8.60 L2.27 7.40 L0.59 5.92 L2.49 2.62 L4.62 3.34 L5.65 2.74 L6.09 0.54 L9.91 0.54 L10.35 2.74 L11.38 3.34 L13.51 2.62 L15.41 5.92 L13.73 7.40 L13.73 8.60 L15.41 10.08 L13.51 13.38 L11.38 12.66Z M5.20 8.00 a2.8 2.8 0 1 0 5.60 0 a2.8 2.8 0 1 0 -5.60 0Z" fill="#ffffff" fill-rule="evenodd" stroke="#ffffff" stroke-width="1" stroke-linejoin="round"/></svg></span>
<span class="tt" style="left:459.5px">|</span>
<span class="tt" style="left:480px">Message Queue - 2025-06-24 13:05:31</span>
<span class="ti" style="left:768px;top:14px"><svg width="16" height="16" viewBox="0 0 16 16" ><circle cx="14.20" cy="9.58" r="1.75" fill="#f4f4f4"/><circle cx="11.27" cy="13.50" r="1.75" fill="#f4f4f4"/><circle cx="6.42" cy="14.20" r="1.75" fill="#f4f4f4"/><circle cx="2.50" cy="11.27" r="1.75" fill="#f4f4f4"/><circle cx="1.80" cy="6.42" r="1.75" fill="#f4f4f4"/><circle cx="9.58" cy="1.80" r="1.75" fill="#f4f4f4"/><circle cx="13.50" cy="4.73" r="1.75" fill="#f4f4f4"/></svg></span>
<span class="ti" style="left:787.5px;top:16px"><svg width="11.6" height="11.6" viewBox="0 0 12 12" ><rect x="0.2" y="0" width="4.6" height="12" rx="0.9" fill="#fff"/><rect x="7" y="0" width="4.6" height="12" rx="0.9" fill="#fff"/></svg></span>
<span class="ti" style="left:802px;top:14px"><svg width="16" height="16" viewBox="0 0 16 16" ><path d="M10.35 13.26 L9.91 15.46 L6.09 15.46 L5.65 13.26 L4.62 12.66 L2.49 13.38 L0.59 10.08 L2.27 8.60 L2.27 7.40 L0.59 5.92 L2.49 2.62 L4.62 3.34 L5.65 2.74 L6.09 0.54 L9.91 0.54 L10.35 2.74 L11.38 3.34 L13.51 2.62 L15.41 5.92 L13.73 7.40 L13.73 8.60 L15.41 10.08 L13.51 13.38 L11.38 12.66Z M5.20 8.00 a2.8 2.8 0 1 0 5.60 0 a2.8 2.8 0 1 0 -5.60 0Z" fill="#ffffff" fill-rule="evenodd" stroke="#ffffff" stroke-width="1" stroke-linejoin="round"/></svg></span>
</div>
<table class="t1"><colgroup><col style="width:237px"><col style="width:185px"><col style="width:206px"><col style="width:214px"><col style="width:274px"><col style="width:270px"><col style="width:145px"></colgroup>
<thead><tr><th><span style="letter-spacing:1.20px;margin-right:-1.20px">Name</span></th><th><span style="letter-spacing:0.19px;margin-right:-0.19px">File descriptors</span></th><th><span style="letter-spacing:0.17px;margin-right:-0.17px">Socket descriptors</span></th><th><span style="letter-spacing:-0.02px;margin-right:0.02px">Erlang processes</span></th><th><span style="letter-spacing:0.82px;margin-right:-0.82px">Memory</span></th><th><span style="letter-spacing:0.03px;margin-right:-0.03px">Disk space</span></th><th><span style="letter-spacing:0.72px;margin-right:-0.72px">Uptime</span></th></tr></thead>
<tbody><tr>
<td><span style="letter-spacing:0.46px;margin-right:-0.46px">rabbit@rnd-apm-new</span></td>
<td><div class="l1"><svg width="14" height="12" viewBox="0 0 14 12" class="ch"><path d="M0.9 0.4 V10.9 H13.6" fill="none" stroke="#f4f4f4" stroke-width="1.9" stroke-linecap="round" stroke-linejoin="round"/><path d="M4.2 8.6 V6.4 M6.8 8.6 V2.8 M9.4 8.6 V4.8 M12 8.6 V2.8" stroke="#f4f4f4" stroke-width="1.9" stroke-linecap="round"/></svg> <span style="letter-spacing:-1.00px;margin-right:1.00px">51</span></div><div class="l2"><span style="letter-spacing:0.17px;margin-right:-0.17px">32,768 available</span></div></td>
<td><div class="l1"><svg width="14" height="12" viewBox="0 0 14 12" class="ch"><path d="M0.9 0.4 V10.9 H13.6" fill="none" stroke="#f4f4f4" stroke-width="1.9" stroke-linecap="round" stroke-linejoin="round"/><path d="M4.2 8.6 V6.4 M6.8 8.6 V2.8 M9.4 8.6 V4.8 M12 8.6 V2.8" stroke="#f4f4f4" stroke-width="1.9" stroke-linecap="round"/></svg> <span>6</span></div><div class="l2"><span style="letter-spacing:0.17px;margin-right:-0.17px">29,401 available</span></div></td>
<td><div class="l1"><svg width="14" height="12" viewBox="0 0 14 12" class="ch"><path d="M0.9 0.4 V10.9 H13.6" fill="none" stroke="#f4f4f4" stroke-width="1.9" stroke-linecap="round" stroke-linejoin="round"/><path d="M4.2 8.6 V6.4 M6.8 8.6 V2.8 M9.4 8.6 V4.8 M12 8.6 V2.8" stroke="#f4f4f4" stroke-width="1.9" stroke-linecap="round"/></svg> <span style="letter-spacing:-0.09px;margin-right:0.09px">1,170</span></div><div class="l2"><span style="letter-spacing:0.12px;margin-right:-0.12px">1,048,576 available</span></div></td>
<td><div class="l1"><svg width="14" height="12" viewBox="0 0 14 12" class="ch"><path d="M0.9 0.4 V10.9 H13.6" fill="none" stroke="#f4f4f4" stroke-width="1.9" stroke-linecap="round" stroke-linejoin="round"/><path d="M4.2 8.6 V6.4 M6.8 8.6 V2.8 M9.4 8.6 V4.8 M12 8.6 V2.8" stroke="#f4f4f4" stroke-width="1.9" stroke-linecap="round"/></svg> <span style="letter-spacing:0.18px;margin-right:-0.18px">196.43 MB</span></div><div class="l2"><span style="letter-spacing:0.31px;margin-right:-0.31px">12.98 GB high watermark</span></div></td>
<td><div class="l1"><svg width="14" height="12" viewBox="0 0 14 12" class="ch"><path d="M0.9 0.4 V10.9 H13.6" fill="none" stroke="#f4f4f4" stroke-width="1.9" stroke-linecap="round" stroke-linejoin="round"/><path d="M4.2 8.6 V6.4 M6.8 8.6 V2.8 M9.4 8.6 V4.8 M12 8.6 V2.8" stroke="#f4f4f4" stroke-width="1.9" stroke-linecap="round"/></svg> <span style="letter-spacing:0.08px;margin-right:-0.08px">63.11 GB</span></div><div class="l2"><span style="letter-spacing:0.39px;margin-right:-0.39px">50.00 MB low watermark</span></div></td>
<td><span style="letter-spacing:0.39px;margin-right:-0.39px">4d 21h 12m</span></td>
</tr></tbody></table>
<table class="t2"><colgroup><col style="width:260px"><col style="width:135px"><col style="width:136px"><col style="width:114px"><col style="width:144px"><col style="width:99px"><col style="width:223px"><col style="width:261px"><col style="width:159px"></colgroup>
<thead><tr><th><span style="letter-spacing:1.20px;margin-right:-1.20px">Name</span></th><th><span style="letter-spacing:0.55px;margin-right:-0.55px">Durable</span></th><th><span style="letter-spacing:0.60px;margin-right:-0.60px">State</span></th><th><span style="letter-spacing:0.18px;margin-right:-0.18px">Ready</span></th><th><span style="letter-spacing:0.36px;margin-right:-0.36px">Unacked</span></th><th><span style="letter-spacing:0.48px;margin-right:-0.48px">Total</span></th><th><span style="letter-spacing:0.30px;margin-right:-0.30px">Incoming(Rate)</span></th><th><span style="letter-spacing:0.36px;margin-right:-0.36px">Deliver / Get(Rate)</span></th><th><span style="letter-spacing:-0.04px;margin-right:0.04px">ACK(Rate)</span></th></tr></thead><tbody>
<tr><td class="n"><svg width="14" height="12" viewBox="0 0 14 12" class="ch"><path d="M0.9 0.4 V10.9 H13.6" fill="none" stroke="#f4f4f4" stroke-width="1.9" stroke-linecap="round" stroke-linejoin="round"/><path d="M4.2 8.6 V6.4 M6.8 8.6 V2.8 M9.4 8.6 V4.8 M12 8.6 V2.8" stroke="#f4f4f4" stroke-width="1.9" stroke-linecap="round"/></svg> <span style="letter-spacing:-0.24px;margin-right:0.24px">REQ_khan11</span></td><td class="c"></td><td class="c"><span style="letter-spacing:0.84px;margin-right:-0.84px">running</span></td><td class="r">0</td><td class="r">0</td><td class="r">0</td><td class="r">0</td><td class="r">0</td><td class="r">0</td></tr>
<tr><td class="n"><svg width="14" height="12" viewBox="0 0 14 12" class="ch"><path d="M0.9 0.4 V10.9 H13.6" fill="none" stroke="#f4f4f4" stroke-width="1.9" stroke-linecap="round" stroke-linejoin="round"/><path d="M4.2 8.6 V6.4 M6.8 8.6 V2.8 M9.4 8.6 V4.8 M12 8.6 V2.8" stroke="#f4f4f4" stroke-width="1.9" stroke-linecap="round"/></svg> <span style="letter-spacing:-0.21px;margin-right:0.21px">REQ_khan12</span></td><td class="c"></td><td class="c"><span style="letter-spacing:0.84px;margin-right:-0.84px">running</span></td><td class="r">0</td><td class="r">0</td><td class="r">0</td><td class="r">0</td><td class="r">0</td><td class="r">0</td></tr>
<tr><td class="n"><svg width="14" height="12" viewBox="0 0 14 12" class="ch"><path d="M0.9 0.4 V10.9 H13.6" fill="none" stroke="#f4f4f4" stroke-width="1.9" stroke-linecap="round" stroke-linejoin="round"/><path d="M4.2 8.6 V6.4 M6.8 8.6 V2.8 M9.4 8.6 V4.8 M12 8.6 V2.8" stroke="#f4f4f4" stroke-width="1.9" stroke-linecap="round"/></svg> <span style="letter-spacing:-0.21px;margin-right:0.21px">REQ_khan13</span></td><td class="c"></td><td class="c"><span style="letter-spacing:0.84px;margin-right:-0.84px">running</span></td><td class="r">0</td><td class="r">0</td><td class="r">0</td><td class="r">0</td><td class="r">0</td><td class="r">0</td></tr>
<tr><td class="n"><svg width="14" height="12" viewBox="0 0 14 12" class="ch"><path d="M0.9 0.4 V10.9 H13.6" fill="none" stroke="#f4f4f4" stroke-width="1.9" stroke-linecap="round" stroke-linejoin="round"/><path d="M4.2 8.6 V6.4 M6.8 8.6 V2.8 M9.4 8.6 V4.8 M12 8.6 V2.8" stroke="#f4f4f4" stroke-width="1.9" stroke-linecap="round"/></svg> <span style="letter-spacing:-0.43px;margin-right:0.43px">RES_khan11</span></td><td class="c"></td><td class="c"><span style="letter-spacing:0.84px;margin-right:-0.84px">running</span></td><td class="r">0</td><td class="r">0</td><td class="r">0</td><td class="r">0</td><td class="r">0</td><td class="r">0</td></tr>
<tr><td class="n"><svg width="14" height="12" viewBox="0 0 14 12" class="ch"><path d="M0.9 0.4 V10.9 H13.6" fill="none" stroke="#f4f4f4" stroke-width="1.9" stroke-linecap="round" stroke-linejoin="round"/><path d="M4.2 8.6 V6.4 M6.8 8.6 V2.8 M9.4 8.6 V4.8 M12 8.6 V2.8" stroke="#f4f4f4" stroke-width="1.9" stroke-linecap="round"/></svg> <span style="letter-spacing:-0.39px;margin-right:0.39px">RES_khan12</span></td><td class="c"></td><td class="c"><span style="letter-spacing:0.84px;margin-right:-0.84px">running</span></td><td class="r">0</td><td class="r">0</td><td class="r">0</td><td class="r">0</td><td class="r">0</td><td class="r">0</td></tr>
<tr><td class="n"><svg width="14" height="12" viewBox="0 0 14 12" class="ch"><path d="M0.9 0.4 V10.9 H13.6" fill="none" stroke="#f4f4f4" stroke-width="1.9" stroke-linecap="round" stroke-linejoin="round"/><path d="M4.2 8.6 V6.4 M6.8 8.6 V2.8 M9.4 8.6 V4.8 M12 8.6 V2.8" stroke="#f4f4f4" stroke-width="1.9" stroke-linecap="round"/></svg> <span style="letter-spacing:-0.39px;margin-right:0.39px">RES_khan13</span></td><td class="c"></td><td class="c"><span style="letter-spacing:0.84px;margin-right:-0.84px">running</span></td><td class="r">0</td><td class="r">0</td><td class="r">0</td><td class="r">0</td><td class="r">0</td><td class="r">0</td></tr>
<tr><td class="n"><svg width="14" height="12" viewBox="0 0 14 12" class="ch"><path d="M0.9 0.4 V10.9 H13.6" fill="none" stroke="#f4f4f4" stroke-width="1.9" stroke-linecap="round" stroke-linejoin="round"/><path d="M4.2 8.6 V6.4 M6.8 8.6 V2.8 M9.4 8.6 V4.8 M12 8.6 V2.8" stroke="#f4f4f4" stroke-width="1.9" stroke-linecap="round"/></svg> <span style="letter-spacing:0.42px;margin-right:-0.42px">event</span></td><td class="c">D</td><td class="c"><span style="letter-spacing:0.84px;margin-right:-0.84px">running</span></td><td class="r">0</td><td class="r">0</td><td class="r">0</td><td class="r">0</td><td class="r">0</td><td class="r">0</td></tr>
<tr><td class="n"><svg width="14" height="12" viewBox="0 0 14 12" class="ch"><path d="M0.9 0.4 V10.9 H13.6" fill="none" stroke="#f4f4f4" stroke-width="1.9" stroke-linecap="round" stroke-linejoin="round"/><path d="M4.2 8.6 V6.4 M6.8 8.6 V2.8 M9.4 8.6 V4.8 M12 8.6 V2.8" stroke="#f4f4f4" stroke-width="1.9" stroke-linecap="round"/></svg> <span style="letter-spacing:0.58px;margin-right:-0.58px">health</span></td><td class="c"></td><td class="c"><span style="letter-spacing:0.84px;margin-right:-0.84px">running</span></td><td class="r">0</td><td class="r">0</td><td class="r">0</td><td class="r">0</td><td class="r">0</td><td class="r">0</td></tr>
<tr><td class="n"><svg width="14" height="12" viewBox="0 0 14 12" class="ch"><path d="M0.9 0.4 V10.9 H13.6" fill="none" stroke="#f4f4f4" stroke-width="1.9" stroke-linecap="round" stroke-linejoin="round"/><path d="M4.2 8.6 V6.4 M6.8 8.6 V2.8 M9.4 8.6 V4.8 M12 8.6 V2.8" stroke="#f4f4f4" stroke-width="1.9" stroke-linecap="round"/></svg> <span style="letter-spacing:0.35px;margin-right:-0.35px">rollupv2_queue</span></td><td class="c"></td><td class="c"><span style="letter-spacing:0.84px;margin-right:-0.84px">running</span></td><td class="r">0</td><td class="r">0</td><td class="r">0</td><td class="r">0</td><td class="r">0</td><td class="r">0</td></tr>
<tr><td class="n"><svg width="14" height="12" viewBox="0 0 14 12" class="ch"><path d="M0.9 0.4 V10.9 H13.6" fill="none" stroke="#f4f4f4" stroke-width="1.9" stroke-linecap="round" stroke-linejoin="round"/><path d="M4.2 8.6 V6.4 M6.8 8.6 V2.8 M9.4 8.6 V4.8 M12 8.6 V2.8" stroke="#f4f4f4" stroke-width="1.9" stroke-linecap="round"/></svg> <span style="letter-spacing:-0.10px;margin-right:0.10px">sys</span></td><td class="c"></td><td class="c"><span style="letter-spacing:0.84px;margin-right:-0.84px">running</span></td><td class="r">0</td><td class="r">0</td><td class="r">0</td><td class="r">10</td><td class="r">10</td><td class="r">10</td></tr>
<tr><td class="n"><svg width="14" height="12" viewBox="0 0 14 12" class="ch"><path d="M0.9 0.4 V10.9 H13.6" fill="none" stroke="#f4f4f4" stroke-width="1.9" stroke-linecap="round" stroke-linejoin="round"/><path d="M4.2 8.6 V6.4 M6.8 8.6 V2.8 M9.4 8.6 V4.8 M12 8.6 V2.8" stroke="#f4f4f4" stroke-width="1.9" stroke-linecap="round"/></svg> <span style="letter-spacing:0.34px;margin-right:-0.34px">was</span></td><td class="c"></td><td class="c"><span style="letter-spacing:0.84px;margin-right:-0.84px">running</span></td><td class="r">0</td><td class="r">0</td><td class="r">0</td><td class="r">24</td><td class="r">25</td><td class="r">25</td></tr>
<tr><td class="n"><svg width="14" height="12" viewBox="0 0 14 12" class="ch"><path d="M0.9 0.4 V10.9 H13.6" fill="none" stroke="#f4f4f4" stroke-width="1.9" stroke-linecap="round" stroke-linejoin="round"/><path d="M4.2 8.6 V6.4 M6.8 8.6 V2.8 M9.4 8.6 V4.8 M12 8.6 V2.8" stroke="#f4f4f4" stroke-width="1.9" stroke-linecap="round"/></svg> <span style="letter-spacing:0.32px;margin-right:-0.32px">was_tmap</span></td><td class="c"></td><td class="c"><span style="letter-spacing:0.84px;margin-right:-0.84px">running</span></td><td class="r">0</td><td class="r">0</td><td class="r">0</td><td class="r">0</td><td class="r">0</td><td class="r">0</td></tr>
<tr><td class="n"><svg width="14" height="12" viewBox="0 0 14 12" class="ch"><path d="M0.9 0.4 V10.9 H13.6" fill="none" stroke="#f4f4f4" stroke-width="1.9" stroke-linecap="round" stroke-linejoin="round"/><path d="M4.2 8.6 V6.4 M6.8 8.6 V2.8 M9.4 8.6 V4.8 M12 8.6 V2.8" stroke="#f4f4f4" stroke-width="1.9" stroke-linecap="round"/></svg> <span style="letter-spacing:0.37px;margin-right:-0.37px">was_ttime</span></td><td class="c"></td><td class="c"><span style="letter-spacing:0.84px;margin-right:-0.84px">running</span></td><td class="r">0</td><td class="r">0</td><td class="r">0</td><td class="r">6</td><td class="r">6</td><td class="r">6</td></tr>
</tbody></table>
</div>
<div id="sbtrack"></div><div id="sbthumb"></div>
</body></html>
